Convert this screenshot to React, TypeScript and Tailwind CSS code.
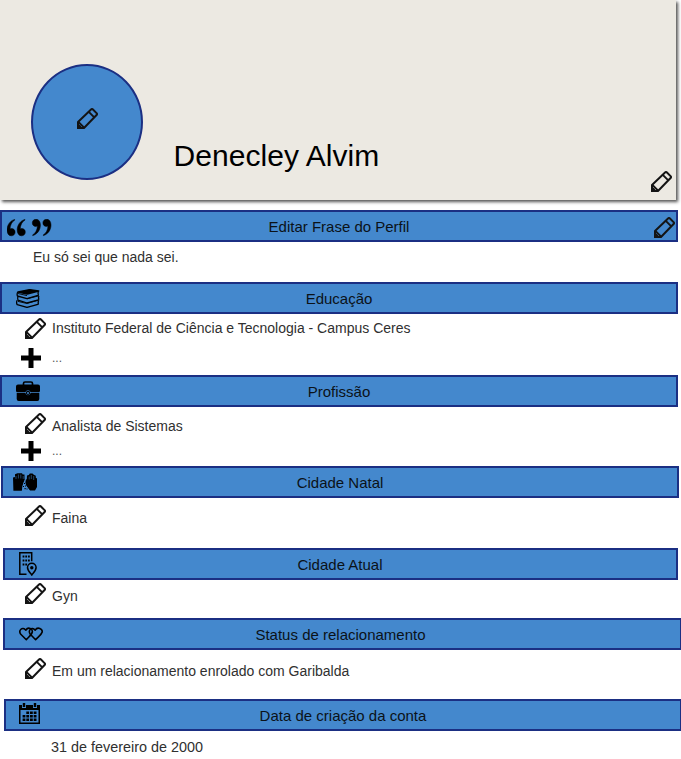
import type { ReactNode } from "react";

function Pencil({ className = "" }: { className?: string }) {
  return (
    <svg viewBox="0 0 21 21" className={`h-[21px] w-[21px] shrink-0 ${className}`} fill="none" stroke="#141414" strokeWidth="2" strokeLinejoin="round">
      <path d="M1 20V14L14.300 1.300Q15 .7 15.700 1.300L19.800 5.400Q20.300 6.100 19.800 6.800L7 20Z" />
      <path d="M1.400 13.800L6.900 19.400M11.800 3.800L17.300 9.300" strokeWidth="1.900" />
      <path d="M0 21V15.800Q4.400 16.500 5.200 21Z" fill="#141414" stroke="none" />
    </svg>
  );
}

function Plus() {
  return (
    <svg viewBox="0 0 20 20" className="h-5 w-5 shrink-0">
      <path d="M7.500 0h5v7.500H20v5h-7.500V20h-5v-7.500H0v-5h7.500z" />
    </svg>
  );
}

const quoteMark = "M7.600.4C3 1.800 0 6 0 11c0 3.500 1.800 5.800 4.300 5.800 2.200 0 3.800-1.500 3.800-3.700 0-2-1.500-3.500-3.400-3.500-.7 0-1.200.1-1.700.4C3.200 6 4.800 2.800 7.900 1z";

function Quotes() {
  return (
    <svg viewBox="0 0 45 18" className="h-[18px] w-[45px]" stroke="#000" strokeWidth=".5">
      <path d={quoteMark} />
      <path transform="translate(10.200 0)" d={quoteMark} />
      <path transform="translate(33.400 17) rotate(180)" d={quoteMark} />
      <path transform="translate(44 17) rotate(180)" d={quoteMark} />
    </svg>
  );
}

function Books() {
  return (
    <svg viewBox="0 0 24 19" className="h-[19px] w-6" fill="none" stroke="#000" strokeWidth="1.300" strokeLinejoin="round">
      <path d="M2 3L13.500.6 22.800 2 11.200 5z" fill="#000" />
      <path d="M2 3Q.6 4.500 1.400 7L11 9.700 22.800 6.200M22.600 2.200Q21.600 4 22.500 6" />
      <path d="M2 7.500Q1.200 9.500 2 11.200L11.200 14 23.200 10.600M22.900 7Q22 9 23 10.600" />
      <path d="M1.200 11.200Q0 13.500 1.200 15.600L11 18.400 22.700 15.200M22.600 11.600Q21.800 13.400 22.500 15" />
      <path d="M2 4.500L11 6.600M2 12.400L11 14.500M11 9.800L22.500 6.900M11 14.300L22.700 11.200" strokeWidth=".9" />
    </svg>
  );
}

function Briefcase() {
  return (
    <svg viewBox="0 0 24 21" className="h-[21px] w-6">
      <path d="M7.500 4V2.500Q7.500 1 9 1h6q1.500 0 1.500 1.500V4" fill="none" stroke="#000" strokeWidth="1.700" />
      <path d="M2 3.500h20q2 0 2 2V10q0 1-1 1h-8.500q-.6-1.800-2.500-1.800T9.500 11H1q-1 0-1-1V5.500q0-2 2-2z" />
      <path d="M.7 11.700h8.600q.7 2.600 2.700 2.600t2.700-2.600h8.600V18q0 2-2 2H2.700q-2 0-2-2z" />
      <circle cx="12" cy="11.900" r="2.100" />
      <circle cx="12" cy="11.900" r="1" fill="#4488cd" />
    </svg>
  );
}

function Hands() {
  return (
    <svg viewBox="0 0 24 19" className="h-[19px] w-6">
      <path d="M0 4.500L2 4V1.200L4.500.2H9L9.700 1.500H11.500V5.500L12.600 6.500 11 8.500 10 12.500 8.800 17.800H.4z" />
      <path d="M24 5.500L22.800 4.800V2.800L20.800 1.800 19.500.5H16.800L15.800 2 14 2.500 13.800 6 12.300 7.500 12.500 12 17 17.600H22L24 14z" />
      <path d="M3 3v3M5.400 1.500v4M7.800 1.500v4M10.200 3v3M16.200 3.500v3M18.300 2v4M20.700 3v4" stroke="#4488cd" strokeWidth=".5" fill="none" />
      <path d="M12.200 3.500L11.700 6.500 9.400 13 9.200 18.500H17L13.200 12.500 12 9.500 13 6z" fill="#4488cd" />
      <path d="M11 10h1v1h-1zM12 12.500h1v1h-1zM10 13h1v1h-1zM11.500 15h1.200v1.200h-1.200zM13.500 15.500h1v1h-1z" />
    </svg>
  );
}

function Building() {
  return (
    <svg viewBox="0 0 18 24" className="h-6 w-[18px]" fill="none" stroke="#000" strokeWidth="1.500">
      <path d="M7.500 22.300H.8V.8h11.900v8.400" />
      <path d="M3.600 4.500h1.800M6.300 4.500h1.800M9 4.500h1.800M3.600 8.500h1.800M6.300 8.500h1.800M9 8.500h1.800M3.600 12.500h1.800M6.300 12.500h1.800" strokeWidth="1.900" />
      <path d="M12.800 23C11 20.700 8.500 18.500 8.500 15.600a4.300 4.300 0 0 1 8.600 0c0 2.900-2.500 5.100-4.300 7.400z" />
      <circle cx="12.800" cy="15.800" r="1.700" fill="#000" stroke="none" />
    </svg>
  );
}

function Hearts() {
  return (
    <svg viewBox="0 0 24 14" className="h-[14px] w-6" fill="none" stroke="#000" strokeWidth="1.600" strokeLinejoin="round">
      <path d="M7.300 12.700L1.800 7.200C-.9 3.600 3.200-1 6.900 3.200c2.200-3.900 7.200-1.300 6.300 2.100-.6 2.600-3.500 4.700-5.900 7.400z" />
      <path d="M16.600 12.700l-5.300-5.500C8.800 3.600 12.500-1 16.200 3.200c2.300-3.900 7.800-1.300 6.900 2.100-.7 2.600-4.100 4.700-6.500 7.400z" />
    </svg>
  );
}

function Calendar() {
  return (
    <svg viewBox="0 0 21 21" className="h-[21px] w-[21px]">
      <path d="M0 2h3v3h4V2h7v3h4V2h3v19H0zM1.500 7v12.500h18V7z" fillRule="evenodd" />
      <path d="M3.800 0h2.400v4H3.800zM14.800 0h2.400v4h-2.400z" />
      <path d="M7.300 8.500h2.800v2.600H7.300zM11 8.500h2.800v2.600H11zM14.700 8.500h2.800v2.600h-2.800zM3.600 12h2.800v2.600H3.600zM7.300 12h2.800v2.600H7.300zM11 12h2.800v2.600H11zM14.700 12h2.800v2.600h-2.800zM3.600 15.500h2.800v2.600H3.600zM7.300 15.500h2.800v2.600H7.300zM11 15.500h2.800v2.600H11zM14.700 15.500h2.800v2.600h-2.800z" />
    </svg>
  );
}

function Bar({ title, icon, className, iconClass, titleClass = "", action }: { title: string; icon: ReactNode; className: string; iconClass: string; titleClass?: string; action?: ReactNode }) {
  return (
    <div className={`grid h-8 shrink-0 grid-cols-1 grid-rows-1 border-2 border-[#1b2f83] bg-[#4488cd] ${className}`}>
      <h2 className={`col-start-1 row-start-1 mt-1.5 text-center text-[15px] leading-[18px] text-[#0b1218] ${titleClass}`}>{title}</h2>
      <div className={`col-start-1 row-start-1 justify-self-start ${iconClass}`}>{icon}</div>
      {action}
    </div>
  );
}

function Row({ text, className, textClass = "" }: { text: string; className: string; textClass?: string }) {
  return (
    <div className={`flex h-[21px] pl-[25px] ${className}`}>
      <Pencil />
      <span className={`ml-1.5 text-sm leading-[21px] ${textClass}`}>{text}</span>
    </div>
  );
}

function AddRow({ className }: { className: string }) {
  return (
    <div className={`flex h-5 items-center pl-[21px] ${className}`}>
      <Plus />
      <span className="ml-[11px] text-xs text-[#555]">...</span>
    </div>
  );
}

export default function App() {
  return (
    <main className="flex h-[759px] w-[681px] flex-col overflow-hidden bg-white font-['Liberation_Sans',Arial,sans-serif] text-[#303030]">
      <header className="flex h-[200px] w-[676px] shrink-0 bg-[#ece9e2] shadow-[2px_2px_3px_#555]">
        <div className="mt-16 ml-[31px] flex h-[116px] w-[112px] rounded-[50%] border-2 border-[#1b2f83] bg-[#4488cd]">
          <Pencil className="mt-[42px] ml-11" />
        </div>
        <h1 className="mt-[138px] ml-[30.500px] text-[30px] leading-9 tracking-[0.05px] text-black">Denecley Alvim</h1>
        <Pencil className="mt-[171px] mr-1 ml-auto" />
      </header>

      <Bar title="Editar Frase do Perfil" icon={<Quotes />} className="mt-2.5 w-[678px]" iconClass="mt-[7px] ml-[5px]"
        action={<Pencil className="col-start-1 row-start-1 mt-[5px] mr-px justify-self-end" />} />
      <p className="mt-[5px] ml-[33px] h-[21px] text-sm leading-[21px]">Eu só sei que nada sei.</p>

      <Bar title="Educação" icon={<Books />} className="mt-[14px] w-[678px]" iconClass="mt-[5px] ml-[14px]" />
      <Row text="Instituto Federal de Ciência e Tecnologia - Campus Ceres" className="mt-1" />
      <AddRow className="mt-[9px]" />

      <Bar title="Profissão" icon={<Briefcase />} className="mt-[7px] w-[678px]" iconClass="mt-1 ml-[14px]" />
      <Row text="Analista de Sistemas" className="mt-1.5" textClass="mt-[3px]" />
      <AddRow className="mt-[7px]" />

      <Bar title="Cidade Natal" icon={<Hands />} className="mt-[5px] ml-px w-[678px]" iconClass="mt-[5px] ml-2.5" />
      <Row text="Faina" className="mt-[7px]" textClass="mt-[3px]" />

      <Bar title="Cidade Atual" icon={<Building />} className="mt-[22px] ml-[3px] w-[675px]" iconClass="mt-0.5 ml-[14px]" titleClass="pr-px" />
      <Row text="Gyn" className="mt-[3px]" textClass="mt-[3px]" />

      <Bar title="Status de relacionamento" icon={<Hearts />} className="mt-[14px] ml-[3px] w-[679px]" iconClass="mt-[7px] ml-[14px]" titleClass="pr-1" />
      <Row text="Em um relacionamento enrolado com Garibalda" className="mt-2" textClass="mt-[3px]" />

      <Bar title="Data de criação da conta" icon={<Calendar />} className="mt-5 ml-1 w-[678px]" iconClass="mt-0.5 ml-[13px]" />
      <p className="mt-1.5 ml-[51px] h-[21px] text-[14.400px] leading-[21px]">31 de fevereiro de 2000</p>
    </main>
  );
}
